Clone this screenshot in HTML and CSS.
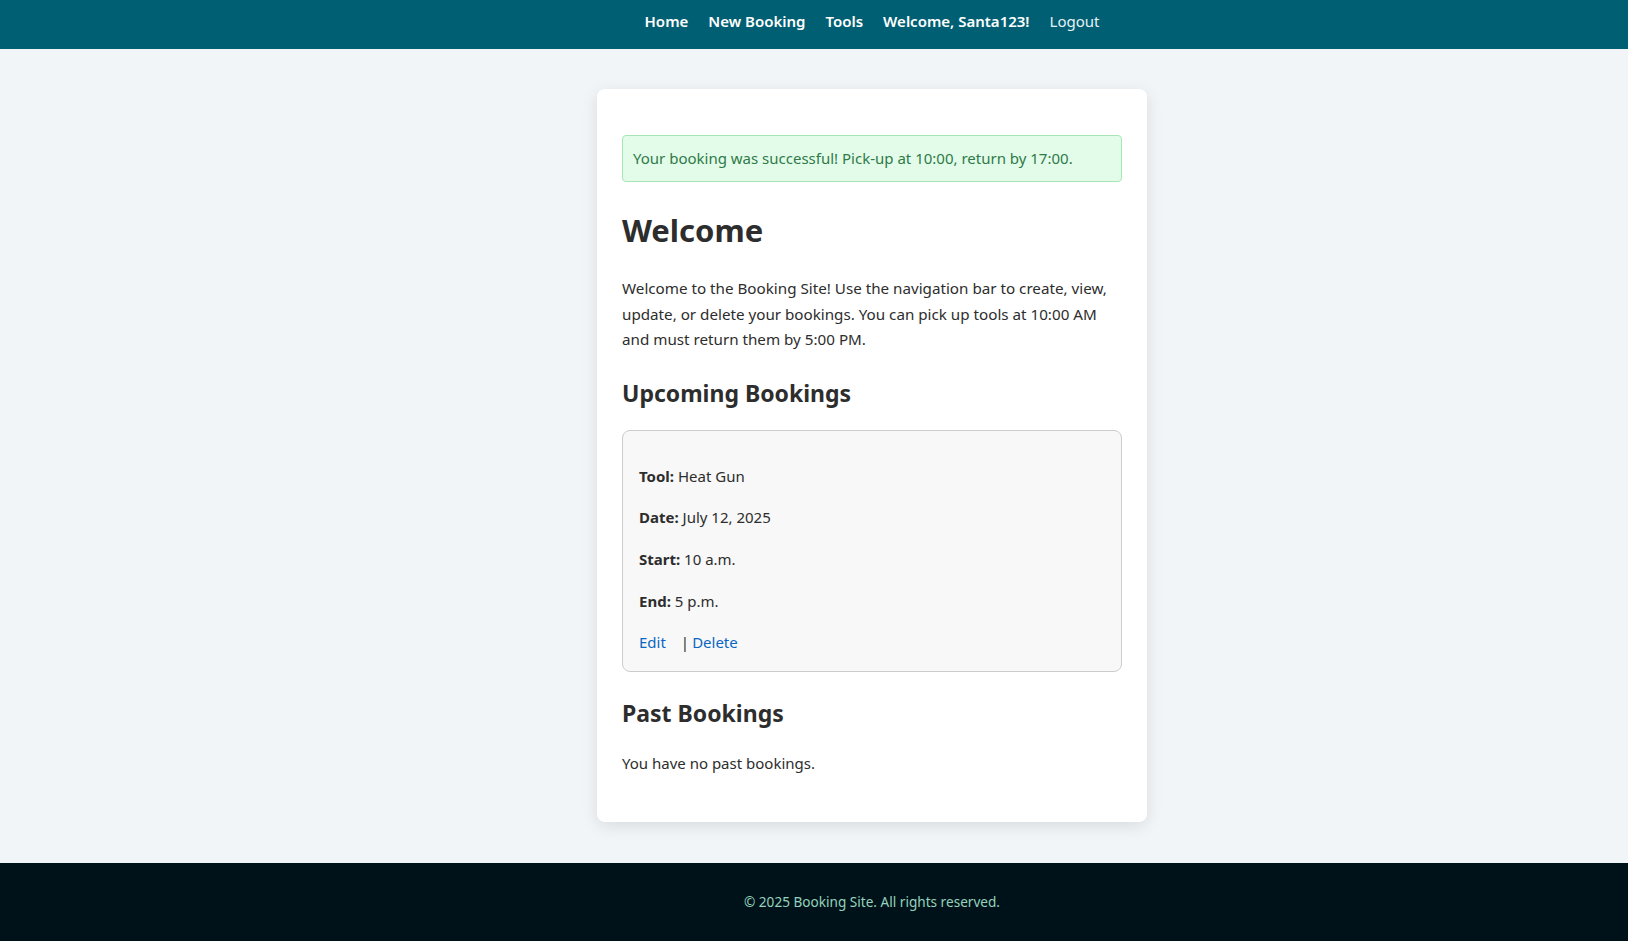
FILE: index.html
```html
<!DOCTYPE html>
<html lang="en">
<head>
<meta charset="utf-8">
<title>Booking Site</title>
<link rel="stylesheet" href="styles.css">
</head>
<body>
<header class="topbar">
  <nav class="nav">
    <a class="nav-link strong" href="#">Home</a>
    <a class="nav-link strong" href="#">New Booking</a>
    <a class="nav-link strong" href="#">Tools</a>
    <span class="nav-link strong">Welcome, Santa123!</span>
    <a class="nav-link" href="#">Logout</a>
  </nav>
</header>
<main class="main">
  <section class="card">
    <div class="alert">Your booking was successful! Pick-up at 10:00, return by 17:00.</div>
    <h1 class="title">Welcome</h1>
    <p class="intro">Welcome to the Booking Site! Use the navigation bar to create, view, update, or delete your bookings. You can pick up tools at 10:00 AM and must return them by 5:00 PM.</p>
    <h2 class="subtitle">Upcoming Bookings</h2>
    <div class="booking">
      <p class="row"><strong>Tool:</strong> Heat Gun</p>
      <p class="row"><strong>Date:</strong> July 12, 2025</p>
      <p class="row"><strong>Start:</strong> 10 a.m.</p>
      <p class="row"><strong>End:</strong> 5 p.m.</p>
      <div class="actions"><a class="link edit" href="#">Edit</a><span class="sep">|</span><a class="link" href="#">Delete</a></div>
    </div>
    <h2 class="subtitle subtitle-past">Past Bookings</h2>
    <p class="empty">You have no past bookings.</p>
  </section>
</main>
<footer class="footer">
  <p class="footer-text">© 2025 Booking Site. All rights reserved.</p>
</footer>
</body>
</html>
```
FILE: styles.css
```css
* { box-sizing: border-box; }
html, body { margin: 0; padding: 0; }
body {
  font-family: "Segoe UI", "Noto Sans", "Open Sans", sans-serif;
  font-size: 15px;
  line-height: 25.6px;
  color: #2d2d2d;
  background: #f1f5f8;
  height: 941px;
  overflow: hidden;
  display: flex;
  flex-direction: column;
}
.topbar {
  background: #005f73;
  height: 49px;
  flex: none;
  padding: 9px 0 0 116px;
}
.nav {
  display: flex;
  justify-content: center;
  gap: 20px;
}
.nav-link {
  color: #ffffff;
  text-decoration: none;
  font-size: 15px;
  line-height: 25.6px;
}
.nav-link.strong { font-weight: 600; }
.nav-link:last-child { color: #e6f2f4; }
.main {
  flex: 1;
  padding: 40px 0 40px 116px;
  display: flex;
  justify-content: center;
  align-items: flex-start;
}
.card {
  width: 550px;
  background: #ffffff;
  border-radius: 8px;
  box-shadow: 0 4px 16px rgba(0, 0, 0, 0.1);
  padding: 46px 25px 25px;
}
.alert {
  background: #e3fce9;
  border: 1px solid #a6e6b6;
  color: #2e7a48;
  border-radius: 4px;
  padding: 10px 10px;
  line-height: 25px;
  margin-bottom: 29px;
}
.title {
  font-size: 31px;
  line-height: 38px;
  font-weight: 700;
  margin: 0 0 27px;
  color: #2d2d2d;
}
.intro { margin: 0 0 26px; font-size: 15.2px; }
.subtitle {
  font-size: 23px;
  line-height: 28px;
  font-weight: 700;
  margin: 0 0 23px;
  color: #2d2d2d;
}
.subtitle-past { margin-bottom: 24px; }
.booking {
  background: #f8f8f8;
  border: 1px solid #cccccc;
  border-radius: 8px;
  padding: 33px 16px 15px;
  margin-bottom: 27px;
}
.row { margin: 0 0 16px; }
.row strong { font-weight: 700; }
.actions { display: flex; align-items: center; }
.link { color: #0a66c2; text-decoration: none; }
.edit { margin-right: 15px; }
.sep { margin-right: 3px; }
.empty { margin: 0 0 21px; }
.footer {
  background: #001219;
  flex: none;
  padding: 27px 0 27px 116px;
  display: flex;
  justify-content: center;
}
.footer-text {
  margin: 0;
  color: #94d2bd;
  font-size: 13.6px;
  line-height: 24px;
}
```
